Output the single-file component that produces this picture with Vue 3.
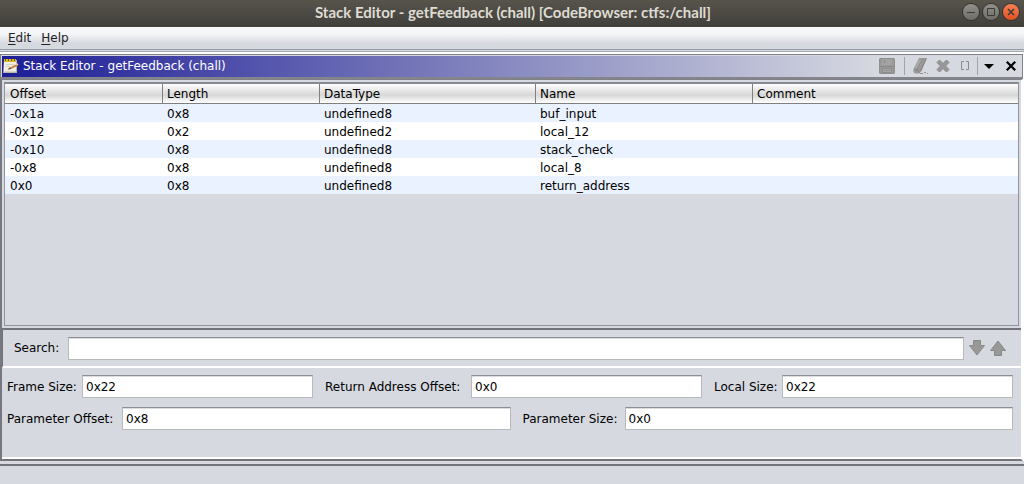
<script setup>
import { ref } from 'vue'

const columns = ['Offset', 'Length', 'DataType', 'Name', 'Comment']
const rows = [
  ['-0x1a', '0x8', 'undefined8', 'buf_input', ''],
  ['-0x12', '0x2', 'undefined2', 'local_12', ''],
  ['-0x10', '0x8', 'undefined8', 'stack_check', ''],
  ['-0x8', '0x8', 'undefined8', 'local_8', ''],
  ['0x0', '0x8', 'undefined8', 'return_address', '']
]
const search = ref('')
const fieldRows = ref([
  [
    { id: 'frame-size', label: 'Frame Size:', value: '0x22' },
    { id: 'return-offset', label: 'Return Address Offset:', value: '0x0' },
    { id: 'local-size', label: 'Local Size:', value: '0x22' }
  ],
  [
    { id: 'param-offset', label: 'Parameter Offset:', value: '0x8' },
    { id: 'param-size', label: 'Parameter Size:', value: '0x0' }
  ]
])
</script>

<template>
  <div class="window">
    <header class="titlebar">
      <h1>Stack Editor - getFeedback (chall) [CodeBrowser: ctfs:/chall]</h1>
      <div class="controls">
        <button class="round" aria-label="Minimize">
          <svg viewBox="0 0 16 16"><path d="M4 8.500h8" /></svg>
        </button>
        <button class="round" aria-label="Maximize">
          <svg viewBox="0 0 16 16"><path d="M4.500 4.500h7v7h-7z" /></svg>
        </button>
        <button class="round close" aria-label="Close">
          <svg viewBox="0 0 16 16"><path d="M5 5l6 6M11 5l-6 6" /></svg>
        </button>
      </div>
    </header>

    <nav class="menubar">
      <button><u>E</u>dit</button>
      <button><u>H</u>elp</button>
    </nav>

    <main class="frame">
      <div class="panel-head">
        <svg class="note" viewBox="0 0 16 16">
          <path d="M1 2h13v13H0z" fill="#b9b7a8" />
          <path d="M1 3h12v10.500H1z" fill="#f1efe3" />
          <path d="M1 1h12v3H1z" fill="#d9b92c" />
          <path d="M2.500 1v2M5.500 1v2M8.500 1v2M11.500 1v2" stroke="#6f6220" />
          <path d="M3 6.500h8M3 8.500h4" stroke="#d2d2cb" />
          <path d="M5 11.500l2-2 7-3.500 1 1.500-7 3.500z" fill="#c97a35" />
          <path d="M4.500 11.500l2.500-2 1 1.500z" fill="#594531" />
          <path d="M13 6l1.500-.8 1 1.500-1.500.8z" fill="#ead0a0" />
        </svg>
        <h2>Stack Editor - getFeedback (chall)</h2>
        <div class="tools">
          <button class="save" aria-label="Save" disabled>
            <svg viewBox="0 0 16 16">
              <path d="M1 0h14l1 1v14l-1 1H1l-1-1V1z" fill="#8f8f8f" />
              <path d="M1 1h14v14H1z" fill="#999" />
              <path d="M3 1h10v6H3z" fill="#a3a3a3" />
              <path d="M1 8.500h14M5.500 2v3" stroke="#8a8a8a" />
              <path d="M3.500 10.500h9v4h-9z" fill="#a6a6a6" stroke="#8c8c8c" />
              <path d="M5 12.500h6" stroke="#929292" />
            </svg>
          </button>
          <span class="sep"></span>
          <button class="erase" aria-label="Clear" disabled>
            <svg viewBox="0 0 16 16">
              <path d="M6 0h8L8.500 13 6 15.500H2L.5 14v-3z" fill="#989898" />
              <path d="M6 1l4 1-5 9-4 0z" fill="#a9a9a9" />
              <path d="M9.500 1l-6 11M13 1L7.500 13M1 11l3 1 3 3" fill="none" stroke="#858585" />
              <path d="M7 15.500h3M11 14.500h2M14 15.500h1" stroke="#929292" />
            </svg>
          </button>
          <button class="delete" aria-label="Delete" disabled>
            <svg viewBox="0 0 14 14">
              <path d="M3.500 1L7 4.500 10.500 1 13 3.500 9.500 7l3.500 3.500-2.500 2.500L7 9.500 3.500 13 1 10.500 4.500 7 1 3.500z" fill="#989898" stroke="#888" />
            </svg>
          </button>
          <button class="array" aria-label="Create array" disabled>
            <svg viewBox="0 0 10 10">
              <path d="M4 .5H1.500v8H4M6 .5h2.500v8H6" fill="none" stroke="#8b8b8b" />
            </svg>
          </button>
          <span class="sep"></span>
          <button class="menu" aria-label="Panel menu">
            <svg viewBox="0 0 10 5"><path d="M0 0h10L5 5z" /></svg>
          </button>
          <button class="dismiss" aria-label="Close panel">
            <svg viewBox="0 0 10 10"><path d="M.8.8l8.400 8.400M9.200.8L.8 9.200" fill="none" stroke="#000" stroke-width="2.200" /></svg>
          </button>
        </div>
      </div>

      <section class="content">
        <div class="grid">
          <table>
            <colgroup>
              <col v-for="c in columns" :key="c" :class="c.toLowerCase()" />
            </colgroup>
            <thead>
              <tr><th v-for="c in columns" :key="c" scope="col">{{ c }}</th></tr>
            </thead>
            <tbody>
              <tr v-for="r in rows" :key="r[0]">
                <td v-for="(v, i) in r" :key="i">{{ v }}</td>
              </tr>
            </tbody>
          </table>
        </div>

        <div class="search">
          <label for="search">Search:</label>
          <input id="search" v-model="search" type="text" />
          <button aria-label="Search down" disabled>
            <svg viewBox="0 0 16 16"><path d="M4.500.5h7v5h4L8 15 .5 5.500h4z" /></svg>
          </button>
          <button aria-label="Search up" disabled>
            <svg viewBox="0 0 16 16"><path d="M4.500 15.500h7v-5h4L8 1 .5 10.500h4z" /></svg>
          </button>
        </div>

        <form class="fields" @submit.prevent>
          <div v-for="(line, i) in fieldRows" :key="i" class="line">
            <div v-for="f in line" :key="f.id" class="field">
              <label :for="f.id" :class="f.id">{{ f.label }}</label>
              <input :id="f.id" v-model="f.value" type="text" />
            </div>
          </div>
        </form>
      </section>
    </main>

    <footer class="status"></footer>
  </div>
</template>

<style>
body {
  margin: 0;
}
</style>

<style scoped>
.window {
  display: flex;
  flex-direction: column;
  min-height: 100vh;
  box-sizing: border-box;
  background: #d6d9e0;
  color: #000;
  font: 12px/18px "DejaVu Sans", sans-serif;
}
button {
  display: flex;
  align-items: center;
  justify-content: center;
  padding: 0;
  border: 0;
  background: none;
  color: inherit;
  font: inherit;
}
svg {
  display: block;
  width: 100%;
  height: 100%;
}
h1,
h2 {
  margin: 0;
}
.titlebar {
  display: grid;
  grid-template-columns: 1fr auto 1fr;
  align-items: center;
  height: 27px;
  padding-bottom: 3px;
  box-sizing: border-box;
  background: linear-gradient(#57544c, #403f3a);
}
.titlebar h1 {
  grid-column: 2;
  padding-left: 2px;
  color: #dfdbd2;
  font: bold 15px/20px Lato, sans-serif;
}
.controls {
  display: flex;
  justify-content: flex-end;
  gap: 4px;
  padding-right: 5px;
}
.round {
  width: 16px;
  height: 16px;
  border-radius: 50%;
  background: linear-gradient(#91908b, #6d6c67);
  box-shadow: 0 0 0 1px #34332f;
}
.round path {
  fill: none;
  stroke: #3c3b37;
}
.round.close {
  background: linear-gradient(#f58057, #e2511f);
}
.round.close path {
  stroke-width: 1.5;
}
.menubar {
  display: flex;
  gap: 10px;
  height: 22px;
  padding: 0 8px;
  background: linear-gradient(#fafafb, #f4f5f7 30%, #d6d9df 75%, #d3d9de);
  border-bottom: 1px solid #939ba8;
}
.menubar button {
  color: #222;
}
.menubar u {
  text-underline-offset: 2px;
}
.frame {
  display: flex;
  flex: 1;
  flex-direction: column;
  margin-top: 1px;
  border-top: 1px solid #a4a8b0;
  background: #fff;
  padding-top: 2px;
}
.panel-head {
  display: flex;
  align-items: center;
  height: 25px;
  margin-right: 1px;
  box-sizing: border-box;
  padding-left: 1px;
  border: 1px solid #808187;
  border-bottom: 2px solid #84848c;
  background: linear-gradient(90deg, #1d1d96, #d6d9e0 86%);
  box-shadow: inset 0 1px #d6d9e0, inset 1px 0 #d6d9e0;
}
.note {
  width: 16px;
  height: 16px;
  margin-left: 1px;
}
.panel-head h2 {
  flex: 1;
  margin-left: 4px;
  color: #fff;
  font: inherit;
}
.tools {
  display: flex;
  align-items: center;
  height: 18px;
}
.sep {
  width: 1px;
  height: 18px;
  background: #a1a4ad;
}
.save {
  width: 16px;
  height: 16px;
  margin-right: 9px;
}
.erase {
  width: 16px;
  height: 16px;
  margin: 0 7px 0 8px;
}
.delete {
  width: 14px;
  height: 14px;
}
.array {
  width: 10px;
  height: 10px;
  margin: 0 7px 0 10px;
}
.menu {
  width: 10px;
  height: 5px;
  margin: 0 12px 0 6px;
}
.dismiss {
  width: 10px;
  height: 10px;
  margin-right: 6px;
}
.content {
  display: flex;
  flex: 1;
  flex-direction: column;
  margin-right: 1px;
  border: 1px solid #808187;
  border-left: 2px solid #77787f;
  border-bottom: 2px solid #74757b;
  border-right: 2px solid #fff;
  background: #d6d9e0;
  box-shadow: inset 0 -2px #fff;
}
.grid {
  flex: 1;
  margin: 2px;
  border: 1px solid #8f96a2;
  border-top: 2px solid #858993;
}
table {
  width: 100%;
  table-layout: fixed;
  border-collapse: separate;
  border-spacing: 0;
}
.offset {
  width: 158px;
}
.length {
  width: 157px;
}
.datatype {
  width: 216px;
}
.name {
  width: 217px;
}
th,
td {
  box-sizing: border-box;
  padding: 0 4px;
  text-align: left;
  font-weight: normal;
}
th:first-child,
td:first-child {
  padding-left: 5px;
}
th {
  height: 20px;
  border-right: 1px solid #808080;
  border-bottom: 1px solid #808080;
  background: linear-gradient(#fff, #dcdcdc 50%, #d8d8d8 60%, #fff);
}
th:last-child {
  border-right: 0;
}
td {
  height: 18px;
  padding-top: 2px;
  line-height: 16px;
}
tbody tr {
  background: #fff;
}
tbody tr:nth-child(odd) {
  background: #ebf2ff;
}
.search {
  display: flex;
  align-items: center;
  gap: 5px;
  height: 40px;
  box-sizing: border-box;
  padding: 0 15px 0 11px;
  border-top: 2px solid #73747a;
  border-left: 1px solid #73747a;
  border-bottom: 2px solid #fff;
}
.search label {
  min-width: 49px;
}
input {
  flex: 1;
  min-width: 0;
  height: 23px;
  box-sizing: border-box;
  padding: 0 3px;
  border: 1px solid #b7b9bd;
  border-top: 1px solid #8c8e94;
  border-radius: 0;
  background: #fff;
  box-shadow: inset 0 1px #dcdde0;
  color: #000;
  font: inherit;
}
.search button {
  width: 16px;
  height: 16px;
}
.search path {
  fill: #989898;
  stroke: #888;
}
.fields {
  display: flex;
  flex-direction: column;
  gap: 9px;
  padding: 7px 8px 29px 5px;
}
.line {
  display: flex;
  gap: 12px;
}
.field {
  display: flex;
  flex: 1 1 auto;
  align-items: center;
  gap: 4px;
}
.frame-size {
  min-width: 71px;
}
.return-offset {
  min-width: 142px;
}
.local-size {
  min-width: 64px;
}
.param-offset {
  min-width: 111px;
}
.param-size {
  min-width: 98px;
}
.status {
  height: 18px;
  margin-top: 3px;
  border-top: 2px solid #74757b;
}
</style>
